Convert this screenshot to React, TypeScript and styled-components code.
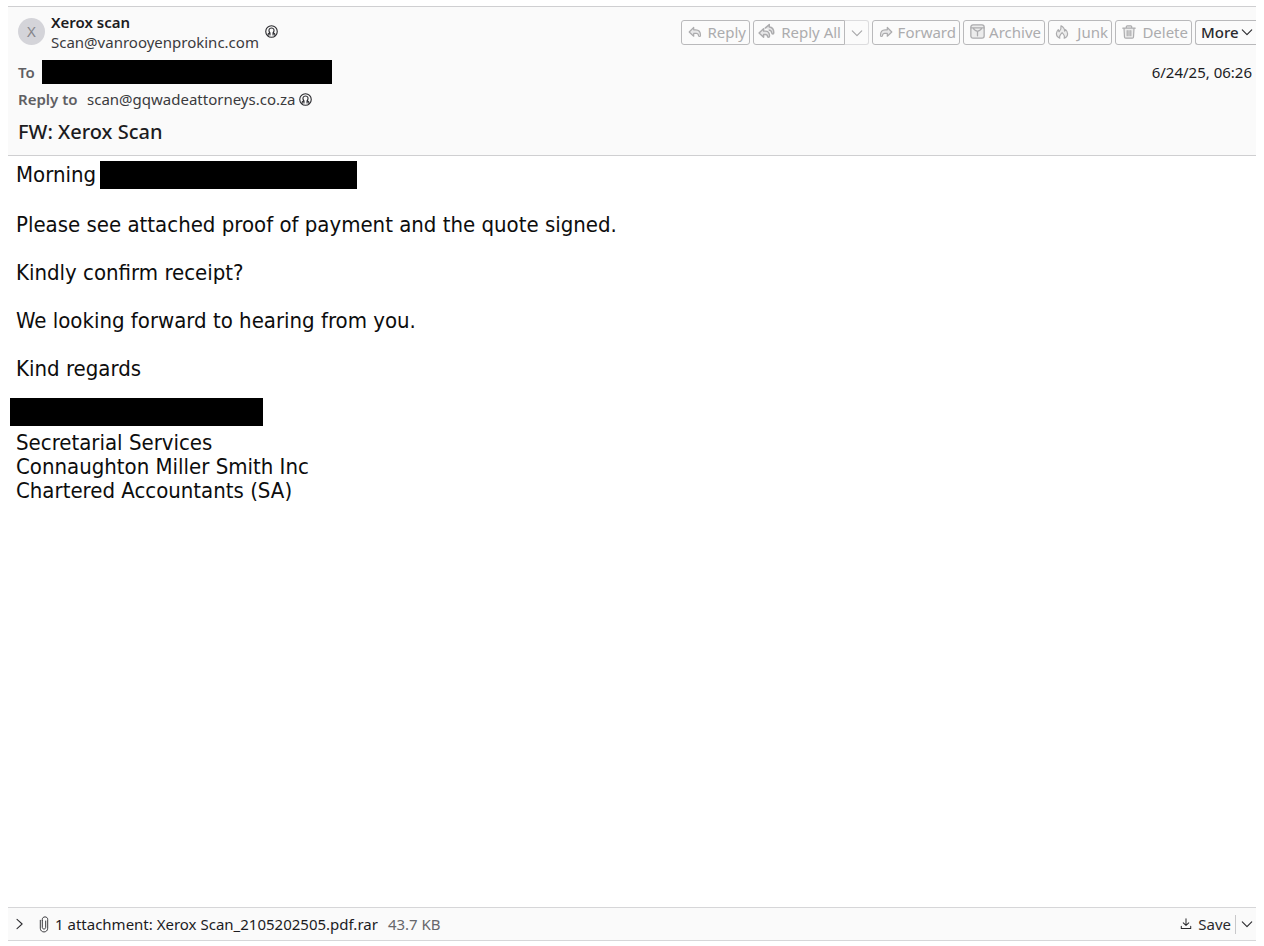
import React from "react";
import styled, { createGlobalStyle } from "styled-components";

const GlobalStyle = createGlobalStyle`
  * { box-sizing: border-box; }
  body {
    margin: 0;
    background: #ffffff;
    color: #1c1c1f;
    font-family: "Noto Sans", "Open Sans", sans-serif;
    font-size: 15px;
    line-height: 20px;
  }
  button { font: inherit; cursor: pointer; }
`;

const Window = styled.div`
  display: flex;
  flex-direction: column;
  min-height: 100vh;
  padding: 6px 8px 5px;
`;

const Header = styled.header`
  display: flex;
  flex-direction: column;
  background: #fafafa;
  border-top: 1px solid #cfcfd1;
  border-bottom: 1px solid #cfcfd1;
  padding: 5px 0 11px 10px;
`;

const TopRow = styled.div`
  display: flex;
  justify-content: space-between;
  align-items: flex-start;
`;

const Sender = styled.div`
  display: flex;
  align-items: center;
`;

const Avatar = styled.div`
  flex: none;
  width: 27px;
  height: 27px;
  margin: 0 6px 2px 0;
  border-radius: 50%;
  background: #d4d4d9;
  color: #86868c;
  line-height: 27px;
  text-align: center;
`;

const SenderText = styled.div`
  display: flex;
  flex-direction: column;
`;

const SenderName = styled.strong`
  font-weight: 600;
`;

const Address = styled.span`
  color: #3a3a3e;
`;

const ContactButton = styled.button<{ $raised?: boolean }>`
  display: flex;
  padding: 0;
  border: 0;
  background: none;
  color: #2a2a2e;
  margin: ${(p) => (p.$raised ? "0 0 2px 6px" : "0 0 0 4px")};
`;

const Toolbar = styled.div`
  display: flex;
  gap: 3px;
  padding-top: 8px;
`;

const ToolButton = styled.button<{ $width: number; $split?: boolean }>`
  display: flex;
  align-items: center;
  justify-content: space-between;
  width: ${(p) => p.$width}px;
  height: 25px;
  padding: 0 3px 2px 6px;
  border: 1px solid #b9b9bb;
  border-radius: ${(p) => (p.$split ? "3px 0 0 3px" : "3px")};
  background: #fbfbfb;
  color: #acacae;
  white-space: nowrap;
`;

const SplitButton = styled(ToolButton)`
  padding-left: 4px;
`;

const SplitGroup = styled.div`
  display: flex;
`;

const SplitMenu = styled.button`
  display: flex;
  align-items: center;
  justify-content: center;
  width: 24px;
  height: 25px;
  padding: 0;
  border: 1px solid #dcdcde;
  border-left: 0;
  border-radius: 0 3px 3px 0;
  background: #fbfbfb;
  color: #a6a6a8;
`;

const MoreButton = styled(ToolButton)`
  border-right: 0;
  border-radius: 3px 0 0 3px;
  padding: 0 3px 2px 5px;
  color: #2a2a2e;
  font-weight: 500;
`;

const Field = styled.div`
  display: flex;
  align-items: center;
`;

const ToRow = styled(Field)`
  justify-content: space-between;
  height: 24px;
  margin-top: 8px;
  padding-right: 4px;
`;

const ReplyRow = styled(Field)`
  margin-top: 5px;
`;

const Label = styled.span<{ $width: number }>`
  width: ${(p) => p.$width}px;
  color: #5f5f63;
  font-weight: 600;
`;

const Redacted = styled.span<{ $width: number; $height: number }>`
  display: block;
  width: ${(p) => p.$width}px;
  height: ${(p) => p.$height}px;
  background: #000000;
`;

const Subject = styled.h1`
  margin: 11px 0 0;
  font-size: 20px;
  font-weight: 500;
  line-height: 24px;
`;

const Body = styled.main`
  flex: 1;
  padding: 5px 8px;
  color: #0d0d0d;
  font-family: "DejaVu Sans Condensed", "DejaVu Sans", sans-serif;
  font-size: 22px;
  line-height: 24px;
`;

const Greeting = styled.p`
  display: flex;
  align-items: center;
  gap: 4px;
  margin: 0 0 24px;
`;

const Paragraph = styled.p`
  margin: 0 0 24px;
`;

const Signature = styled.address`
  margin: -7px 0 0 -6px;
  font-style: normal;
`;

const SignatureLines = styled.div`
  display: flex;
  flex-direction: column;
  padding: 5px 0 0 6px;
`;

const AttachmentBar = styled.footer`
  display: flex;
  align-items: center;
  justify-content: space-between;
  height: 34px;
  border-top: 1px solid #d6d6d8;
  border-bottom: 1px solid #d6d6d8;
  background: #fafafa;
`;

const AttachmentInfo = styled.div`
  display: flex;
  align-items: center;
`;

const PlainButton = styled.button`
  display: flex;
  align-items: center;
  padding: 0;
  border: 0;
  background: none;
  color: #2a2a2e;
`;

const ExpandButton = styled(PlainButton)`
  margin: 0 13px 0 6px;
`;

const FileLink = styled.a`
  margin-left: 6px;
  color: inherit;
  text-decoration: none;
`;

const FileSize = styled.span`
  margin-left: 10px;
  color: #67676b;
`;

const SaveGroup = styled.div`
  display: flex;
  align-items: center;
`;

const SaveButton = styled(PlainButton)`
  gap: 6px;
  padding-right: 4px;
`;

const SaveMenu = styled(PlainButton)`
  height: 19px;
  padding: 0 3px 0 5px;
  border-left: 1px solid #c8c8ca;
`;

type IconProps = { size?: number; children: React.ReactNode };

const Icon = ({ size = 14, children }: IconProps) => (
  <svg
    width={size}
    height={size}
    viewBox="0 0 14 14"
    fill="none"
    stroke="currentColor"
    strokeWidth="1.2"
    strokeLinecap="round"
    strokeLinejoin="round"
    aria-hidden="true"
  >
    {children}
  </svg>
);

const ChevronDown = () => (
  <Icon size={12}>
    <path d="M1.500 4.500 7 10l5.500-5.500" strokeWidth="1.300" />
  </Icon>
);

const ContactIcon = () => (
  <Icon size={13}>
    <circle cx="7" cy="7" r="6.200" />
    <path d="M3.200 11.500c-.3-1.900.6-2.500 1.900-3C3.300 5.500 4.500 3.200 7 3.200s3.700 2.300 1.900 5.300c1.300.5 2.200 1.100 1.900 3" />
    <path d="M5.300 8.500v2.300M8.700 8.500v2.300" />
  </Icon>
);

const ReplyIcon = () => (
  <Icon>
    <path d="M1.200 7 5.700 2.500v2.300h2.100c3.100 0 4.700 2 4.700 5.400 0 .8-.4 1.300-1 1.300s-1.100-.4-1.100-1.200c0-1.300-.8-1.900-2.200-1.900H5.700v2.800z" fill="currentColor" fillOpacity="0.25" />
  </Icon>
);

const ReplyAllIcon = () => (
  <Icon size={17}>
    <path d="M.9 8.300 4.600 4.700v2h1.500c2.300 0 3.400 1.400 3.400 4.100 0 .7-.4 1-.9 1s-.8-.4-.8-.9c0-1-.6-1.500-1.700-1.500H4.600v2.400z" fill="currentColor" fillOpacity="0.25" />
    <path d="M5.900 4.200 9.300 1.300v2c2.500.2 3.700 1.800 3.700 4.700 0 .7-.4 1-.8 1s-.8-.3-.9-.8c-.1-1.300-.6-2-2-2.200" fill="currentColor" fillOpacity="0.25" />
  </Icon>
);

const ForwardIcon = () => (
  <Icon>
    <path d="M12.800 7 8.300 2.500v2.300H6.200c-3.100 0-4.700 2-4.700 5.400 0 .8.400 1.300 1 1.300s1.100-.4 1.100-1.200c0-1.300.8-1.900 2.200-1.900h2.500v2.800z" fill="currentColor" fillOpacity="0.25" />
  </Icon>
);

const ArchiveIcon = () => (
  <Icon size={15}>
    <path d="M2.800.8h8.400c1.200 0 2 .8 2 2v8.400c0 1.200-.8 2-2 2H2.800c-1.200 0-2-.8-2-2V2.800c0-1.200.8-2 2-2z" fill="currentColor" fillOpacity="0.18" />
    <path d="M1 3.700h12M3 3.900c.5 1.700 2 2.300 4 3 2-.7 3.500-1.300 4-3M7 6.900v4.100" />
  </Icon>
);

const JunkIcon = () => (
  <Icon>
    <path d="M4.800 13.200C2.500 12.300 1.400 10.600 1.400 8.600c0-1.700.8-2.800 1.900-4 .1 1 .3 1.600.9 2.100C5.500 5 6.500 3.200 6 .8c2.500 1.300 3.600 3.200 3.700 5.300.5-.4.800-.9.900-1.500 1.300 1.200 2 2.500 2 4.100 0 2-1.200 3.700-3.400 4.500.8-2 .1-3.300-2.100-5.500-2.300 2.200-3.100 3.600-2.300 5.500z" fill="currentColor" fillOpacity="0.18" />
  </Icon>
);

const DeleteIcon = () => (
  <Icon size={14}>
    <path d="M.8 3.200h12.400M4.300 3V1.700c0-.6.4-.9.900-.9h3.600c.5 0 .9.300.9.900V3M2 3.400l.5 8.600c0 .8.500 1.200 1.200 1.200h6.600c.7 0 1.200-.4 1.200-1.200l.5-8.600" fill="currentColor" fillOpacity="0.18" />
    <path d="M5.200 5.700v5M8.800 5.700v5M7 5.700v5" />
  </Icon>
);

const ClipIcon = () => (
  <svg width="10" height="17" viewBox="0 0 10 17" fill="none" stroke="#3a3a3e" strokeWidth="1" strokeLinecap="round" aria-hidden="true">
    <path d="M6.700 5v6.300c0 2.300-3.400 2.300-3.400 0V4.500M3.300 4.500V3.300c0-3.200 5.400-3.200 5.400 0v8.900c0 5-7.400 5-7.400 0V4.300" />
  </svg>
);

export default function App() {
  return (
    <Window>
      <GlobalStyle />
      <Header>
        <TopRow>
          <Sender>
            <Avatar>X</Avatar>
            <SenderText>
              <SenderName>Xerox scan</SenderName>
              <Address>Scan@vanrooyenprokinc.com</Address>
            </SenderText>
            <ContactButton $raised aria-label="Add sender to contacts">
              <ContactIcon />
            </ContactButton>
          </Sender>
          <Toolbar>
            <ToolButton $width={69}><ReplyIcon />Reply</ToolButton>
            <SplitGroup>
              <SplitButton $width={92} $split><ReplyAllIcon />Reply All</SplitButton>
              <SplitMenu aria-label="Reply options"><ChevronDown /></SplitMenu>
            </SplitGroup>
            <ToolButton $width={88}><ForwardIcon />Forward</ToolButton>
            <ToolButton $width={82}><ArchiveIcon />Archive</ToolButton>
            <ToolButton $width={64}><JunkIcon />Junk</ToolButton>
            <ToolButton $width={77}><DeleteIcon />Delete</ToolButton>
            <MoreButton $width={61}>More<ChevronDown /></MoreButton>
          </Toolbar>
        </TopRow>
        <ToRow>
          <Field>
            <Label $width={24}>To</Label>
            <Redacted $width={290} $height={24} />
          </Field>
          <time>6/24/25, 06:26</time>
        </ToRow>
        <ReplyRow>
          <Label $width={69}>Reply to</Label>
          <Address>scan@gqwadeattorneys.co.za</Address>
          <ContactButton aria-label="Add reply address to contacts">
            <ContactIcon />
          </ContactButton>
        </ReplyRow>
        <Subject>FW: Xerox Scan</Subject>
      </Header>
      <Body>
        <Greeting>
          Morning
          <Redacted $width={257} $height={28} />
        </Greeting>
        <Paragraph>Please see attached proof of payment and the quote signed.</Paragraph>
        <Paragraph>Kindly confirm receipt?</Paragraph>
        <Paragraph>We looking forward to hearing from you.</Paragraph>
        <Paragraph>Kind regards</Paragraph>
        <Signature>
          <Redacted $width={253} $height={28} />
          <SignatureLines>
            <span>Secretarial Services</span>
            <span>Connaughton Miller Smith Inc</span>
            <span>Chartered Accountants (SA)</span>
          </SignatureLines>
        </Signature>
      </Body>
      <AttachmentBar>
        <AttachmentInfo>
          <ExpandButton aria-label="Show attachments">
            <Icon size={12}>
              <path d="m3.500 1.500 6 5.500-6 5.500" />
            </Icon>
          </ExpandButton>
          <ClipIcon />
          <FileLink href="#attachment">1 attachment: Xerox Scan_2105202505.pdf.rar</FileLink>
          <FileSize>43.7 KB</FileSize>
        </AttachmentInfo>
        <SaveGroup>
          <SaveButton>
            <Icon size={12}>
              <path d="M7 1v7.500M3.800 5.700 7 8.700l3.200-3M1.500 9.500v2.700h11V9.500" />
            </Icon>
            Save
          </SaveButton>
          <SaveMenu aria-label="Save options"><ChevronDown /></SaveMenu>
        </SaveGroup>
      </AttachmentBar>
    </Window>
  );
}
